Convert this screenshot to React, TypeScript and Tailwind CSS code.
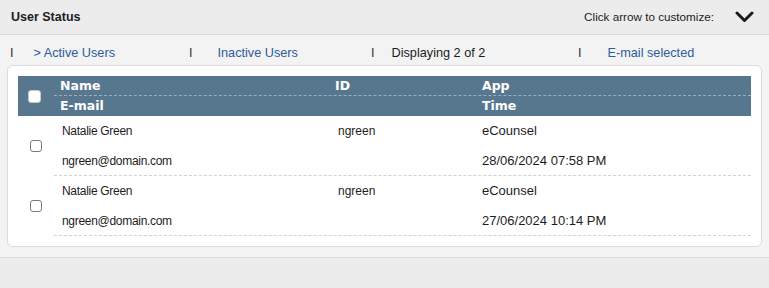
import React from 'react'

const navItems = [
  { label: '> Active Users', width: 'w-[179px]', gap: 'ml-[20px]', link: true },
  { label: 'Inactive Users', width: 'w-[182px]', gap: 'ml-[25px]', link: true },
  { label: 'Displaying 2 of 2', width: 'w-[207px]', gap: 'ml-[17px]', link: false },
  { label: 'E-mail selected', width: 'flex-1', gap: 'ml-[26px]', link: true },
]

const sessions = [
  { name: 'Natalie Green', id: 'ngreen', app: 'eCounsel', email: 'ngreen@domain.com', time: '28/06/2024 07:58 PM' },
  { name: 'Natalie Green', id: 'ngreen', app: 'eCounsel', email: 'ngreen@domain.com', time: '27/06/2024 10:14 PM' },
]

function Chevron() {
  return (
    <svg width="19" height="12" viewBox="0 0 19 12" fill="none">
      <polyline points="2,2 9.5,9.5 17,2" stroke="#1a1a1a" strokeWidth="3" strokeLinecap="round" strokeLinejoin="round" />
    </svg>
  )
}

function SessionRow({ row }: { row: (typeof sessions)[number] }) {
  return (
    <div className="flex">
      <div className="flex w-[36px] items-center justify-center">
        <span className="block h-[12px] w-[12px] rounded-[3px] border border-[#7a7a7a] bg-white" />
      </div>
      <div className="flex-1 border-b border-dashed border-[#d2d2d2]">
        <div className="grid h-[30px] grid-cols-[275px_147px_1fr] items-center">
          <span className="pl-[8px] text-[12px] tracking-[-0.3px]">{row.name}</span>
          <span className="pl-[9px] text-[12px]">{row.id}</span>
          <span className="pl-[6px] text-[13px]">{row.app}</span>
        </div>
        <div className="grid h-[29px] grid-cols-[275px_147px_1fr] items-center">
          <span className="pl-[8px] text-[12px] tracking-[-0.3px]">{row.email}</span>
          <span />
          <span className="pl-[6px] text-[13px]">{row.time}</span>
        </div>
      </div>
    </div>
  )
}

export default function App() {
  return (
    <div className="flex h-[288px] w-[769px] flex-col bg-[#ececec] font-['Liberation_Sans',Arial,sans-serif] text-[#1d1d1d]">
      <div className="flex h-[35px] items-center justify-between border-b border-[#dadada] pl-[11px] pr-[15px]">
        <span className="text-[12.5px] font-bold">User Status</span>
        <div className="flex items-center gap-[21px]">
          <span className="text-[11.7px]">Click arrow to customize:</span>
          <Chevron />
        </div>
      </div>

      <div className="bg-[#f2f3f2] px-[7px] pb-[10px] pt-[9px]">
        <div className="flex h-[20px] items-center pl-[3px] text-[12.7px]">
          {navItems.map((item) => (
            <div key={item.label} className={`flex items-center ${item.width}`}>
              <span className="text-[#333]">I</span>
              <span className={`${item.gap} ${item.link ? 'text-[#2f5c9c]' : 'text-[#1d1d1d]'}`}>{item.label}</span>
            </div>
          ))}
        </div>

        <div className="mt-[1px] rounded-[6px] border border-[#dcdcdc] bg-white p-[10px]">
          <div className="flex bg-[#57778f] font-['DejaVu_Sans',Verdana,sans-serif] text-[12.5px] font-bold text-white">
            <div className="flex w-[36px] items-center">
              <span className="ml-[10px] block h-[13px] w-[13px] rounded-[3px] border border-[#c8c8c8] bg-white" />
            </div>
            <div className="flex-1">
              <div className="grid h-[20px] grid-cols-[275px_147px_1fr] items-center border-b border-dashed border-[#9aaebd] pt-[1px]">
                <span className="pl-[6px]">Name</span>
                <span className="pl-[6px]">ID</span>
                <span className="pl-[6px]">App</span>
              </div>
              <div className="grid h-[20px] grid-cols-[275px_147px_1fr] items-center pt-[1px]">
                <span className="pl-[6px]">E-mail</span>
                <span />
                <span className="pl-[6px]">Time</span>
              </div>
            </div>
          </div>
          {sessions.map((row) => (
            <SessionRow key={row.time} row={row} />
          ))}
        </div>
      </div>

      <div className="flex-1 border-t border-[#dcdcdc] bg-[#ececec]" />
    </div>
  )
}
